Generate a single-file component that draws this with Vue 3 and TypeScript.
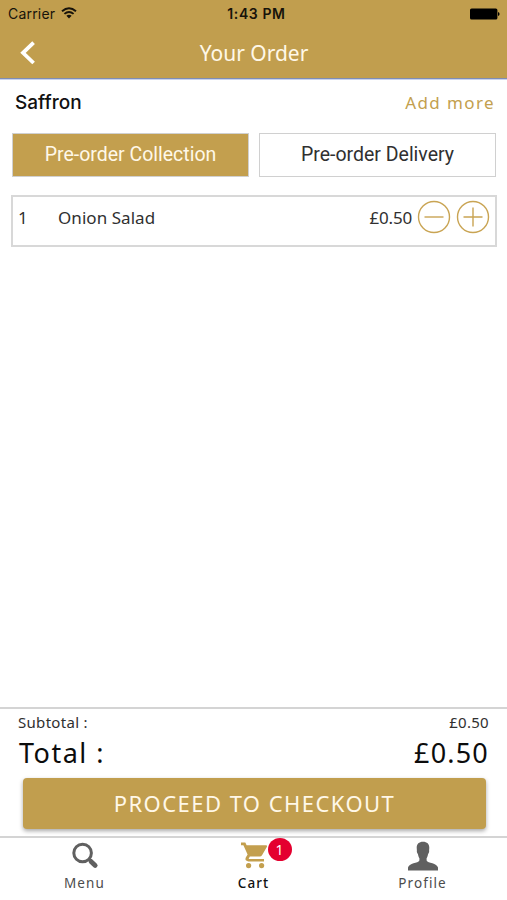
<script setup lang="ts">
import { computed, ref } from 'vue'

interface OrderLine {
  name: string
  quantity: number
  price: number
}

const modes = ['Pre-order Collection', 'Pre-order Delivery']
const activeMode = ref(0)
const lines = ref<OrderLine[]>([{ name: 'Onion Salad', quantity: 1, price: 0.5 }])

const total = computed(() => lines.value.reduce((sum, l) => sum + l.quantity * l.price, 0))
const count = computed(() => lines.value.reduce((sum, l) => sum + l.quantity, 0))
const money = (value: number): string => `£${value.toFixed(2)}`

function change(line: OrderLine, by: number): void {
  line.quantity = Math.max(0, line.quantity + by)
}
</script>

<template>
  <div class="screen">
    <header class="top">
      <div class="status">
        <div class="carrier">
          <span>Carrier</span>
          <svg class="wifi" width="16" height="12" viewBox="0 0 16 12">
            <path d="M1 4.3Q8 -2 15 4.3M3.4 6.9Q8 2.9 12.6 6.9" fill="none" stroke="#17130a" stroke-width="1.9" />
            <path d="M5.4 8.8Q8 6.6 10.6 8.8L8 11.5Z" fill="#17130a" />
          </svg>
        </div>
        <span class="time">1:43 PM</span>
        <svg class="battery" width="30" height="12" viewBox="0 0 30 12">
          <rect x="0" y="0.4" width="27.4" height="11.2" rx="1.6" />
          <path d="M28 4Q29.6 4.4 29.6 6T28 8Z" />
        </svg>
      </div>
      <div class="nav">
        <svg class="back" width="16" height="25" viewBox="0 0 16 25">
          <path d="M13.6 1.6L3 11.8L13.6 22" fill="none" stroke="#fff" stroke-width="3.8" />
        </svg>
        <h1>Your Order</h1>
      </div>
    </header>

    <main>
      <div class="place">
        <span class="restaurant">Saffron</span>
        <a class="add">Add more</a>
      </div>
      <div class="modes">
        <button
          v-for="(mode, i) in modes"
          :key="mode"
          class="mode"
          :class="{ active: i === activeMode }"
          @click="activeMode = i"
        >
          <span>{{ mode }}</span>
        </button>
      </div>
      <ul class="lines">
        <li v-for="line in lines" :key="line.name" class="line">
          <span class="qty">{{ line.quantity }}</span>
          <span class="name">{{ line.name }}</span>
          <span class="price">{{ money(line.price) }}</span>
          <button class="round" @click="change(line, -1)">
            <svg width="34" height="34" viewBox="0 0 34 34"><circle cx="17" cy="17" r="15.5" /><path d="M7.5 17H26.5" /></svg>
          </button>
          <button class="round plus" @click="change(line, 1)">
            <svg width="34" height="34" viewBox="0 0 34 34"><circle cx="17" cy="17" r="15.5" /><path d="M7.5 17H26.5M17 7.5V26.5" /></svg>
          </button>
        </li>
      </ul>
    </main>

    <section class="summary">
      <div class="subtotal"><span class="label">Subtotal :</span><span>{{ money(total) }}</span></div>
      <div class="total"><span class="label">Total :</span><span class="sum">{{ money(total) }}</span></div>
      <button class="checkout"><span>PROCEED TO CHECKOUT</span></button>
    </section>

    <nav class="tabs">
      <a class="tab">
        <svg width="28" height="30" viewBox="0 0 28 30">
          <circle cx="11.6" cy="12" r="8.8" fill="none" stroke="#606060" stroke-width="3" />
          <path d="M17.8 18.2L19.8 20.2" stroke="#606060" stroke-width="3" />
          <path d="M20 20.4L24.2 24.4" stroke="#606060" stroke-width="4.8" stroke-linecap="round" />
        </svg>
        <span>Menu</span>
      </a>
      <a class="tab current">
        <div class="cart">
          <svg width="28" height="30" viewBox="0 0 28 30">
            <path
              fill="#c39f4e"
              d="M1 1.5H5.3L6.6 4.2H26Q27.6 4.4 26.8 6L22 14.2Q21.2 15.4 19.8 15.4H9.8L8.6 18H24V20.4H8.4Q4.4 20 5.8 16.4L7.6 13.4L3.4 4.2H1Z"
            />
            <circle cx="8.6" cy="24.6" r="2.6" fill="#c39f4e" />
            <circle cx="21.6" cy="24.6" r="2.6" fill="#c39f4e" />
          </svg>
          <span class="badge">{{ count }}</span>
        </div>
        <span>Cart</span>
      </a>
      <a class="tab">
        <svg width="32" height="30" viewBox="0 0 32 30">
          <path
            fill="#606060"
            d="M16 0.8C20 0.8 22.4 3 22.3 6.8L22.1 9.6C22.4 10.6 21.9 12.2 21.1 13C20.8 15 20.2 16.2 19.6 17.2V19.4C20.8 22.2 30.2 21.8 31 26.6V29.4H1V26.6C1.8 21.8 11.2 22.2 12.4 19.4V17.2C11.8 16.2 11.2 15 10.9 13C10.1 12.2 9.6 10.6 9.9 9.6L9.7 6.8C9.6 3 12 0.8 16 0.8Z"
          />
        </svg>
        <span>Profile</span>
      </a>
    </nav>
  </div>
</template>

<style>
body {
  margin: 0;
  background: #fff;
}
</style>

<style scoped>
.screen {
  display: flex;
  flex-direction: column;
  width: 507px;
  height: 900px;
  overflow: hidden;
  background: #fff;
  color: #303030;
  font-family: 'Noto Sans', sans-serif;
}
button {
  padding: 0;
  border: 0;
  background: none;
  font: inherit;
  color: inherit;
}
.top {
  box-sizing: border-box;
  height: 80px;
  background: #c19e4e;
  border-bottom: 1px solid #c9d3ee;
  box-shadow: inset 0 -1px #7f8db4;
}
.status {
  display: grid;
  grid-template-columns: 1fr auto 1fr;
  align-items: center;
  height: 27px;
  padding: 0 7px 0 8px;
  color: #17130a;
  font-family: Inter, sans-serif;
  font-size: 14px;
}
.carrier {
  display: flex;
  align-items: center;
  gap: 7px;
  letter-spacing: 0.2px;
}
.wifi {
  margin: 0 0 2px -1px;
}
.time {
  margin-left: 5px;
  font-weight: 600;
  letter-spacing: 0.6px;
}
.battery {
  justify-self: end;
  fill: #000;
}
.nav {
  display: grid;
  grid-template-columns: 1fr auto 1fr;
  align-items: center;
  height: 52px;
}
.back {
  margin-left: 20px;
}
h1 {
  margin: 0;
  padding-left: 1px;
  color: #fff8e8;
  font-size: 21px;
  font-weight: 400;
}
main {
  flex: 1;
  padding: 0 11px;
}
.place {
  display: flex;
  align-items: center;
  justify-content: space-between;
  height: 44px;
  padding: 0 1px 0 4px;
}
.restaurant {
  color: #111;
  font-family: Inter, sans-serif;
  font-size: 19px;
  font-weight: 500;
}
.add {
  color: #c39f4e;
  font-size: 17px;
  letter-spacing: 1.4px;
}
.modes {
  display: grid;
  grid-template-columns: 1fr 1fr;
  gap: 10px;
  padding: 9px 0 0 1px;
}
.mode {
  box-sizing: border-box;
  height: 44px;
  padding-bottom: 2px;
  border: 1px solid #d0d0d0;
  font-family: Roboto, sans-serif;
  font-size: 19.5px;
}
.mode.active {
  background: #c39f4e;
  color: #fff8e8;
}
.lines {
  margin: 18px -1px 0 0;
  padding: 0;
  list-style: none;
}
.line {
  box-sizing: border-box;
  display: flex;
  align-items: center;
  height: 52px;
  padding: 0 5px 8px;
  border: 2px solid #d8d8d8;
  font-size: 17px;
}
.qty {
  width: 40px;
}
.name {
  flex: 1;
  letter-spacing: 0.05px;
}
.price {
  margin-right: 5px;
  letter-spacing: -0.2px;
}
.round {
  display: flex;
}
.plus {
  margin-left: 5px;
}
.round svg {
  fill: none;
  stroke: #c9a453;
  stroke-width: 1.4;
}
.summary {
  box-sizing: border-box;
  height: 129px;
  border-top: 2px solid #d4d4d4;
}
.subtotal,
.total {
  display: flex;
  align-items: center;
  justify-content: space-between;
}
.subtotal {
  height: 25px;
  padding: 0 18px;
  font-size: 15px;
  letter-spacing: 0.3px;
}
.total {
  height: 36px;
  padding: 0 18px 0 19px;
  color: #0c0c0c;
  font-size: 27px;
  letter-spacing: 1.2px;
}
.total .label {
  letter-spacing: 1.5px;
}
.checkout {
  display: block;
  width: 463px;
  height: 51px;
  margin: 8px 0 0 23px;
  padding-bottom: 1px;
  border-radius: 4px;
  background: #c19e4e;
  box-shadow: 0 2px 4px rgba(0, 0, 0, 0.35);
  color: #fff8e8;
  font-size: 22px;
  letter-spacing: 1.45px;
}
.tabs {
  box-sizing: border-box;
  display: grid;
  grid-template-columns: repeat(3, 1fr);
  height: 64px;
  border-top: 2px solid #d4d4d4;
  color: #4c4c4c;
  font-size: 13.5px;
  line-height: 18px;
  letter-spacing: 1.1px;
}
.tab {
  display: flex;
  flex-direction: column;
  align-items: center;
  gap: 3px;
  padding-top: 3px;
}
.tab svg {
  display: block;
}
.current {
  color: #111;
  font-weight: 500;
}
.cart {
  position: relative;
}
.badge {
  position: absolute;
  top: -3px;
  left: 28px;
  width: 24px;
  height: 23px;
  border-radius: 50%;
  background: #e4002f;
  color: #fff;
  font-size: 14px;
  font-weight: 400;
  line-height: 23px;
  letter-spacing: 0;
  text-align: center;
}
</style>
